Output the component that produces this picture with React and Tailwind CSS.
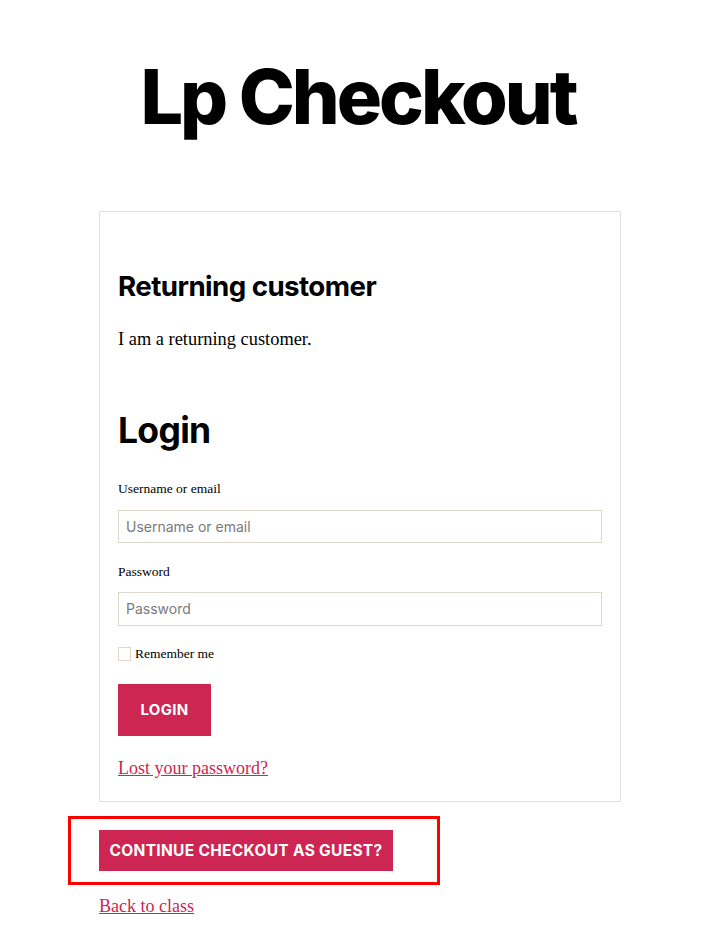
export default function App() {
  const serif = { fontFamily: '"Liberation Serif", serif' };
  return (
    <div className="min-h-[932px] w-[716px] bg-white text-black" style={serif}>
      <h1 className="pt-[52px] text-center font-['Inter',sans-serif] text-[75.5px] font-extrabold leading-[1.2] tracking-[-0.04em]">
        Lp Checkout
      </h1>
      <div className="ml-[99px] mt-[68px] w-[522px]">
        <div className="border border-[#dedede] px-[18px] pt-[57px] pb-[20px]">
          <h2 className="font-['Inter',sans-serif] text-[27.7px] font-bold leading-[1.25] tracking-[-0.02em]">
            Returning customer
          </h2>
          <p className="mt-[23px] text-[18.4px] leading-[1.5]">I am a returning customer.</p>
          <h2 className="mt-[55px] font-['Inter',sans-serif] text-[35.5px] font-bold leading-[1.25] tracking-[-0.02em]">
            Login
          </h2>
          <label className="mt-[27px] block text-[13.5px] leading-[1.4]">Username or email</label>
          <input
            className="mt-[11px] block h-[33px] w-[484px] border border-[#dcd7ca] px-[7px] font-['Inter',sans-serif] text-[14px] placeholder:text-[#7a7a7a]"
            placeholder="Username or email"
          />
          <label className="mt-[20px] block text-[13.5px] leading-[1.4]">Password</label>
          <input
            type="password"
            className="mt-[10px] block h-[34px] w-[484px] border border-[#dcd7ca] px-[7px] font-['Inter',sans-serif] text-[14px] placeholder:text-[#7a7a7a]"
            placeholder="Password"
          />
          <div className="mt-[19px] flex items-center gap-[4px]">
            <span className="block h-[14px] w-[13px] border border-[#dcd7ca]" />
            <span className="text-[13.5px] leading-[1.4]">Remember me</span>
          </div>
          <button className="mt-[20px] block h-[52px] w-[93px] bg-[#cd2653] font-['Inter',sans-serif] text-[15px] font-bold tracking-[0.02em] text-white">
            LOGIN
          </button>
          <a href="#" className="mt-[20px] block text-[18px] leading-[1.4] text-[#cd2653] underline">
            Lost your password?
          </a>
        </div>
      </div>
      <div className="ml-[68px] mt-[14px] h-[69px] w-[372px] border-[3px] border-[#ff0000] pt-[11px] pl-[28px]">
        <button className="h-[41px] w-[294px] bg-[#cd2653] font-['Inter',sans-serif] text-[15.5px] font-bold tracking-[0.02em] text-white">
          CONTINUE CHECKOUT AS GUEST?
        </button>
      </div>
      <a href="#" className="ml-[99px] mt-[9px] inline-block text-[18px] leading-[1.4] text-[#cd2653] underline">
        Back to class
      </a>
    </div>
  );
}
